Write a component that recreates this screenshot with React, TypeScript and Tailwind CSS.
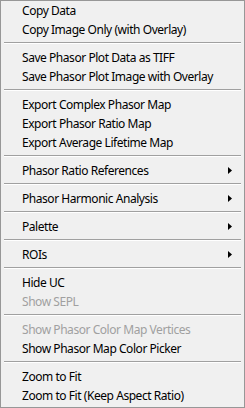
import React from "react";

type Entry =
  | { kind: "item"; label: string; disabled?: boolean; sub?: boolean }
  | { kind: "sep" };

const entries: Entry[] = [
  { kind: "item", label: "Copy Data" },
  { kind: "item", label: "Copy Image Only (with Overlay)" },
  { kind: "sep" },
  { kind: "item", label: "Save Phasor Plot Data as TIFF" },
  { kind: "item", label: "Save Phasor Plot Image with Overlay" },
  { kind: "sep" },
  { kind: "item", label: "Export Complex Phasor Map" },
  { kind: "item", label: "Export Phasor Ratio Map" },
  { kind: "item", label: "Export Average Lifetime Map" },
  { kind: "sep" },
  { kind: "item", label: "Phasor Ratio References", sub: true },
  { kind: "sep" },
  { kind: "item", label: "Phasor Harmonic Analysis", sub: true },
  { kind: "sep" },
  { kind: "item", label: "Palette", sub: true },
  { kind: "sep" },
  { kind: "item", label: "ROIs", sub: true },
  { kind: "sep" },
  { kind: "item", label: "Hide UC" },
  { kind: "item", label: "Show SEPL", disabled: true },
  { kind: "sep" },
  { kind: "item", label: "Show Phasor Color Map Vertices", disabled: true },
  { kind: "item", label: "Show Phasor Map Color Picker" },
  { kind: "sep" },
  { kind: "item", label: "Zoom to Fit" },
  { kind: "item", label: "Zoom to Fit (Keep Aspect Ratio)" },
];

export default function App() {
  return (
    <div
      className="w-[245px] h-[408px] bg-[#f0f0f0] border border-[#979797] flex flex-col overflow-hidden"
      style={{ fontFamily: '"Noto Sans", "Open Sans", sans-serif' }}
    >
      {entries.map((e, i) =>
        e.kind === "sep" ? (
          <div key={i} className="h-[9px] shrink-0 pl-[3px] pr-[3px] pt-[3px]">
            <div className="h-px bg-[#a0a0a0]" />
            <div className="h-px bg-white" />
          </div>
        ) : (
          <div
            key={i}
            className={`h-[19px] shrink-0 flex items-center justify-between pl-[21px] pr-[12px] text-[12px] tracking-[-0.45px] leading-none ${
              e.disabled ? "text-[#a0a0a0]" : "text-black"
            }`}
          >
            <span className="whitespace-nowrap">{e.label}</span>
            {e.sub && (
              <svg width="4" height="7" viewBox="0 0 4 7" className="block">
                <path d="M0 0 L4 3.5 L0 7 Z" fill="#000" />
              </svg>
            )}
          </div>
        )
      )}
    </div>
  );
}
